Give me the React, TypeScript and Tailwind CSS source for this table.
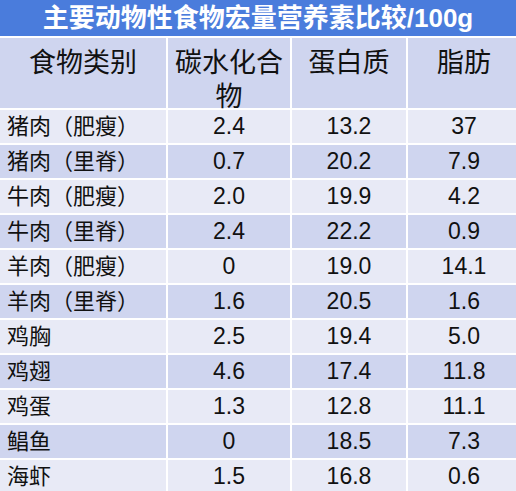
import React from 'react';

type Row = [string, string, string, string];

const rows: Row[] = [
  ['猪肉（肥瘦）', '2.4', '13.2', '37'],
  ['猪肉（里脊）', '0.7', '20.2', '7.9'],
  ['牛肉（肥瘦）', '2.0', '19.9', '4.2'],
  ['牛肉（里脊）', '2.4', '22.2', '0.9'],
  ['羊肉（肥瘦）', '0', '19.0', '14.1'],
  ['羊肉（里脊）', '1.6', '20.5', '1.6'],
  ['鸡胸', '2.5', '19.4', '5.0'],
  ['鸡翅', '4.6', '17.4', '11.8'],
  ['鸡蛋', '1.3', '12.8', '11.1'],
  ['鲳鱼', '0', '18.5', '7.3'],
  ['海虾', '1.5', '16.8', '0.6'],
];

const font = { fontFamily: '"Liberation Sans", "Noto Sans CJK SC", sans-serif' };

const App: React.FC = () => {
  return (
    <div className="w-[516px] h-[491px] overflow-hidden bg-white text-[#111]" style={font}>
      {/* title */}
      <div className="h-[36px] bg-[#4a7cdc] flex items-center justify-center text-white font-bold text-[26px] leading-none">
        主要动物性食物宏量营养素比较/100g
      </div>

      {/* table */}
      <div className="mt-[2px] grid grid-cols-[166px_122px_114px_112px] gap-[2px]">
        <div className="h-[70px] bg-[#cfd5ef] text-center text-[27px] leading-[34px] pt-[8px]">食物类别</div>
        <div className="h-[70px] bg-[#cfd5ef] text-center text-[27px] leading-[34px] pt-[8px] px-1">碳水化合物</div>
        <div className="h-[70px] bg-[#cfd5ef] text-center text-[27px] leading-[34px] pt-[8px]">蛋白质</div>
        <div className="h-[70px] bg-[#cfd5ef] text-center text-[27px] leading-[34px] pt-[8px]">脂肪</div>

        {rows.map((r, i) => {
          const bg = i % 2 === 0 ? 'bg-[#e8eaf6]' : 'bg-[#cfd5ef]';
          return (
            <React.Fragment key={r[0]}>
              <div className={`${bg} h-[33px] flex items-center pl-[7px] text-[22px] whitespace-nowrap`}>{r[0]}</div>
              <div className={`${bg} h-[33px] flex items-center justify-center text-[23px]`}>{r[1]}</div>
              <div className={`${bg} h-[33px] flex items-center justify-center text-[23px]`}>{r[2]}</div>
              <div className={`${bg} h-[33px] flex items-center justify-center text-[23px]`}>{r[3]}</div>
            </React.Fragment>
          );
        })}
      </div>
    </div>
  );
};

export default App;
